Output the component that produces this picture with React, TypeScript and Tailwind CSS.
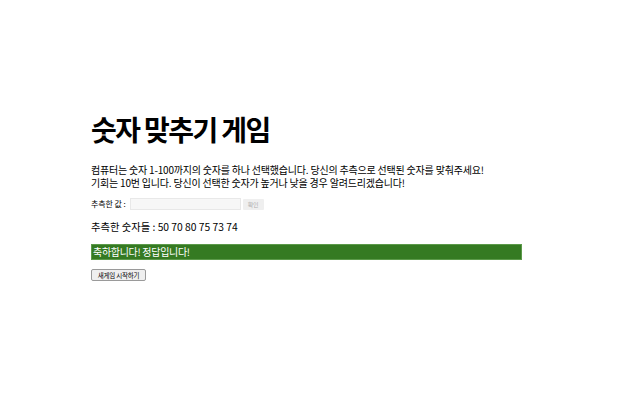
export default function App() {
  const guesses = [50, 70, 80, 75, 73, 74];

  return (
    <div className="min-h-[416px] w-full bg-white font-['Noto_Sans_CJK_KR',sans-serif] text-black">
      <div className="ml-[91px] w-[431px] pt-[109px]">
        <h1 className="text-[28px] font-bold leading-[40px] tracking-[-1.6px]">숫자 맞추기 게임</h1>

        <p className="mt-[14px] text-[10px] leading-[13px] tracking-[-0.2px]">
          컴퓨터는 숫자 1-100까지의 숫자를 하나 선택했습니다. 당신의 추측으로 선택된 숫자를 맞춰주세요!
          <br />
          기회는 10번 입니다. 당신이 선택한 숫자가 높거나 낮을 경우 알려드리겠습니다!
        </p>

        <div className="mt-[9px] flex items-center gap-[2px] text-[8px] leading-[12px] tracking-[-0.1px]">
          <span>추측한 값 :</span>
          <input
            disabled
            className="ml-[2px] h-[12px] w-[111px] border border-[#e8e8e8] bg-[#f7f7f7]"
          />
          <button
            disabled
            className="h-[11px] w-[21px] rounded-[1px] bg-[#efefef] text-[6px] leading-[11px] text-[#b0b0b0]"
          >
            확인
          </button>
        </div>

        <p className="mt-[10px] text-[10.3px] leading-[14px]">
          추측한 숫자들 : {guesses.join(" ")}
        </p>

        <div className="mt-[10px] h-[16px] border border-[#5c9a4a] bg-[#357a22] px-[1px] text-[10px] leading-[14px] tracking-[-0.3px] text-white">
          축하합니다! 정답입니다!
        </div>

        <button className="mt-[9px] block h-[12px] w-[55px] rounded-[2px] border border-[#9a9a9a] bg-[#efefef] text-[6.5px] leading-[10px] tracking-[-0.2px]">
          새게임 시작하기
        </button>
      </div>
    </div>
  );
}
